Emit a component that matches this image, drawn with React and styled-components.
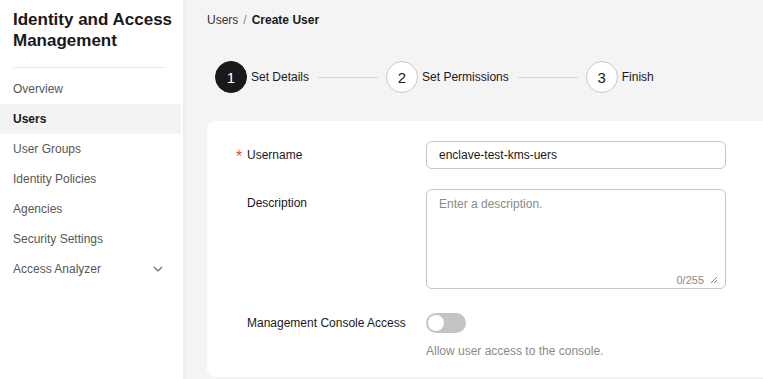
import React from 'react'
import styled, { createGlobalStyle } from 'styled-components'

const GlobalStyle = createGlobalStyle`
  html, body { margin: 0; padding: 0; background: #f4f4f4; }
  body { font-family: Arial, "Liberation Sans", sans-serif; color: #191919; }
  * { box-sizing: border-box; }
`

const Page = styled.div`
  display: flex;
  width: 763px;
  height: 379px;
  overflow: hidden;
`

const Sidebar = styled.aside`
  width: 183px;
  flex-shrink: 0;
  background: #fff;
  box-shadow: 1px 0 4px rgba(0, 0, 0, 0.06);
  padding-top: 9px;
`

const SideTitle = styled.h1`
  margin: 0 18px 0 13px;
  font-size: 17px;
  line-height: 21px;
  font-weight: 700;
  color: #191919;
  padding-bottom: 16px;
  border-bottom: 1px solid #e8e8e8;
  white-space: nowrap;
`

const Nav = styled.nav`
  display: flex;
  flex-direction: column;
  padding-top: 6px;
  width: 181px;
`

const NavItem = styled.div`
  height: 30px;
  display: flex;
  align-items: center;
  justify-content: space-between;
  padding: 0 17px 0 13px;
  font-size: 12px;
  color: ${p => (p.$active ? '#191919' : '#575757')};
  font-weight: ${p => (p.$active ? 700 : 400)};
  background: ${p => (p.$active ? '#f3f3f3' : 'transparent')};
`

const Main = styled.main`
  flex: 1;
  padding: 13px 0 0 24px;
  display: flex;
  flex-direction: column;
`

const Crumbs = styled.div`
  font-size: 12px;
  color: #333;
  height: 15px;
  display: flex;
  gap: 5px;
  & b { font-weight: 700; color: #191919; }
  & span { color: #8a8a8a; }
`

const Steps = styled.div`
  display: flex;
  align-items: center;
  margin: 32px 0 0 8px;
  height: 34px;
`

const Step = styled.div`
  display: flex;
  align-items: center;
  gap: 4px;
  font-size: 12px;
  color: #191919;
`

const StepDot = styled.div`
  width: 32px;
  height: 32px;
  border-radius: 50%;
  display: flex;
  align-items: center;
  justify-content: center;
  font-size: 15px;
  background: ${p => (p.$current ? '#191919' : '#fff')};
  color: ${p => (p.$current ? '#fff' : '#191919')};
  border: 1px solid ${p => (p.$current ? '#191919' : '#c9c9c9')};
`

const StepLine = styled.div`
  width: 60px;
  height: 1px;
  background: #d6d6d6;
  margin: 0 8px 0 9px;
`

const Card = styled.section`
  margin-top: 27px;
  flex: 1;
  margin-bottom: 2px;
  margin-right: -20px;
  background: #fff;
  border-radius: 8px;
  padding: 20px 0 0 31px;
  display: flex;
  flex-direction: column;
  gap: 20px;
`

const Row = styled.div`
  display: grid;
  grid-template-columns: 188px 300px;
  align-items: start;
`

const Label = styled.label`
  font-size: 12px;
  color: #191919;
  line-height: 28px;
  padding-left: 9px;
  position: relative;
`

const Star = styled.span`
  position: absolute;
  left: -2px;
  top: 2px;
  color: #e84a4a;
  font-size: 16px;
`

const Input = styled.div`
  height: 28px;
  border: 1px solid #c7c7c7;
  border-radius: 6px;
  padding: 0 12px;
  display: flex;
  align-items: center;
  font-size: 12px;
  color: #191919;
`

const TextArea = styled.div`
  height: 100px;
  border: 1px solid #c7c7c7;
  border-radius: 6px;
  padding: 7px 12px;
  font-size: 12px;
  color: #8a8a8a;
  position: relative;
`

const Counter = styled.div`
  position: absolute;
  right: 7px;
  bottom: 2px;
  display: flex;
  align-items: center;
  gap: 6px;
  font-size: 11px;
  color: #8a8a8a;
`

const SwitchCol = styled.div`
  display: flex;
  flex-direction: column;
  gap: 11px;
  padding-top: 4px;
`

const Switch = styled.div`
  width: 40px;
  height: 20px;
  border-radius: 10px;
  background: #c4c4c4;
  padding: 2px;
  & div {
    width: 16px;
    height: 16px;
    border-radius: 50%;
    background: #fff;
  }
`

const Hint = styled.div`
  font-size: 12px;
  color: #8a8a8a;
`

const Chevron = () => (
  <svg width="12" height="12" viewBox="0 0 12 12" fill="none" stroke="#666" strokeWidth="1.2">
    <path d="M2 4l4 4 4-4" />
  </svg>
)

const ResizeMark = () => (
  <svg width="8" height="8" viewBox="0 0 8 8" stroke="#8a8a8a" strokeWidth="1">
    <path d="M1 7L7 1M4 7L7 4" />
  </svg>
)

const navItems = ['Overview', 'Users', 'User Groups', 'Identity Policies', 'Agencies', 'Security Settings']

export default function App() {
  return (
    <Page>
      <GlobalStyle />
      <Sidebar>
        <SideTitle>Identity and Access<br />Management</SideTitle>
        <Nav>
          {navItems.map(n => (
            <NavItem key={n} $active={n === 'Users'}>{n}</NavItem>
          ))}
          <NavItem>Access Analyzer <Chevron /></NavItem>
        </Nav>
      </Sidebar>
      <Main>
        <Crumbs>
          Users <span>/</span> <b>Create User</b>
        </Crumbs>
        <Steps>
          <Step><StepDot $current>1</StepDot>Set Details</Step>
          <StepLine />
          <Step><StepDot>2</StepDot>Set Permissions</Step>
          <StepLine />
          <Step><StepDot>3</StepDot>Finish</Step>
        </Steps>
        <Card>
          <Row>
            <Label><Star>*</Star>Username</Label>
            <Input>enclave-test-kms-uers</Input>
          </Row>
          <Row>
            <Label>Description</Label>
            <TextArea>
              Enter a description.
              <Counter>0/255 <ResizeMark /></Counter>
            </TextArea>
          </Row>
          <Row>
            <Label>Management Console Access</Label>
            <SwitchCol>
              <Switch><div /></Switch>
              <Hint>Allow user access to the console.</Hint>
            </SwitchCol>
          </Row>
        </Card>
      </Main>
    </Page>
  )
}
